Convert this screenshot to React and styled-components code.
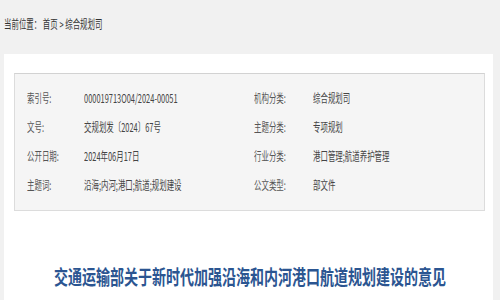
import React from "react";
import styled, { createGlobalStyle } from "styled-components";

const GlobalStyle = createGlobalStyle`
  body {
    margin: 0;
    background: #f1f1f1;
    font-family: "Noto Sans CJK SC", "Noto Sans", sans-serif;
    color: #333;
  }
`;

const Page = styled.div`
  padding: 0 7px 0 4px;
  height: 300px;
  overflow: hidden;
`;

const Crumbs = styled.div`
  height: 54px;
  padding-top: 16px;
  box-sizing: border-box;
  font-size: 12px;
  line-height: 16px;
  color: #333;
  white-space: nowrap;
`;

// the source page is rendered with a narrow face, so glyphs are squeezed
const Squeeze = styled.span`
  display: inline-block;
  flex: none;
  white-space: nowrap;
  transform: scaleX(${(p) => p.$sx || 0.62});
  transform-origin: ${(p) => (p.$center ? "center" : "left")} center;
`;

const Panel = styled.div`
  background: #fff;
  padding: 19px 8px 40px 10px;
  min-height: 300px;
`;

const MetaBox = styled.div`
  background: #f5f5f5;
  border: 1px solid #dcdcdc;
  border-top-color: #d2d2d2;
  padding: 9px 0 11px 12px;
  display: grid;
  grid-template-columns: 57px 170px 59px 1fr;
  grid-auto-rows: 29px;
  align-items: center;
  font-size: 12px;
`;

const Label = styled.div`
  color: #555;
`;

const Value = styled.div`
  color: #444;
`;

const Title = styled.h1`
  margin: 54px 0 0;
  display: flex;
  justify-content: center;
  font-size: 20px;
  line-height: 24px;
  font-weight: 700;
  color: #2b5591;
`;

const rows = [
  ["索引号:", "000019713O04/2024-00051", "机构分类:", "综合规划司"],
  ["文号:", "交规划发〔2024〕67号", "主题分类:", "专项规划"],
  ["公开日期:", "2024年06月17日", "行业分类:", "港口管理;航道养护管理"],
  ["主题词:", "沿海;内河;港口;航道;规划建设", "公文类型:", "部文件"],
];

const App = () => {
  return (
    <Page>
      <GlobalStyle />
      <Crumbs>
        <Squeeze>当前位置： 首页 &gt; 综合规划司</Squeeze>
      </Crumbs>
      <Panel>
        <MetaBox>
          {rows.map((row, ix) => (
            <React.Fragment key={`meta-${ix}`}>
              <Label>
                <Squeeze>{row[0]}</Squeeze>
              </Label>
              <Value>
                <Squeeze>{row[1]}</Squeeze>
              </Value>
              <Label>
                <Squeeze>{row[2]}</Squeeze>
              </Label>
              <Value>
                <Squeeze>{row[3]}</Squeeze>
              </Value>
            </React.Fragment>
          ))}
        </MetaBox>
        <Title>
          <Squeeze $sx={0.7} $center>
            交通运输部关于新时代加强沿海和内河港口航道规划建设的意见
          </Squeeze>
        </Title>
      </Panel>
    </Page>
  );
};

export default App;
